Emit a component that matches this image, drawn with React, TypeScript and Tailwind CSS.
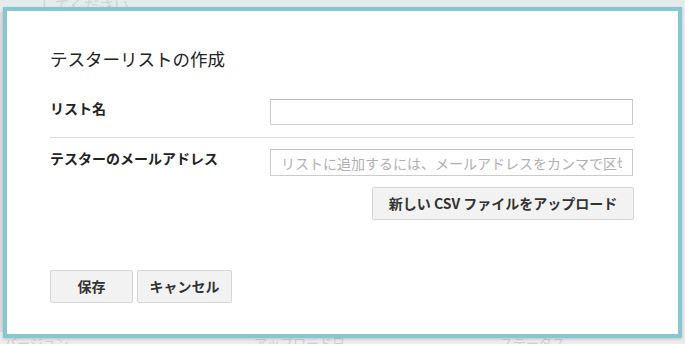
import React from 'react';

const jp = { fontFamily: '"Noto Sans CJK JP", "Noto Sans", sans-serif' };

export default function App() {
  return (
    <div className="relative w-[685px] h-[344px] overflow-hidden bg-[#ececec]" style={jp}>
      {/* page behind the dialog */}
      <div className="absolute inset-x-0 top-0 h-[20px] bg-gradient-to-b from-[#e6eaea] to-[#eceeee]" />
      <div className="absolute left-[40px] top-[-6px] text-[15px] text-[#cfd2d2]">してください</div>
      <div className="absolute left-0 top-[12px] w-[3px] h-[320px] bg-[#dcdcdc]" />
      <div className="absolute left-[4px] top-[333px] text-[13px] text-[#cfcfcf]">バージョン</div>
      <div className="absolute left-[254px] top-[333px] text-[13px] text-[#cfcfcf]">アップロード日</div>
      <div className="absolute left-[500px] top-[333px] text-[13px] text-[#cfcfcf]">ステータス</div>

      {/* dialog */}
      <div className="absolute left-[3px] top-[7px] w-[679px] h-[331px] border-4 border-[#86c8d1] bg-white shadow-[0_1px_3px_rgba(0,0,0,0.2)]">
        <div className="flex flex-col pl-[43px] pr-[44px] pt-[36px]">
          <h1 className="text-[17.5px] leading-[24px] text-[#222] font-normal">テスターリストの作成</h1>

          <div className="flex items-start mt-[28px]">
            <label className="w-[220px] shrink-0 text-[14px] leading-[18px] font-bold text-[#222]">リスト名</label>
            <input
              type="text"
              className="w-[363px] h-[26px] border border-[#cccccc] border-t-[#c0c0c0] bg-white px-[10px] text-[14px] outline-none"
            />
          </div>

          <div className="h-px bg-[#dcdcdc] mt-[12px]" />

          <div className="flex items-start mt-[11px]">
            <label className="w-[220px] shrink-0 text-[14px] leading-[18px] font-bold text-[#222]">テスターのメールアドレス</label>
            <input
              type="text"
              placeholder="リストに追加するには、メールアドレスをカンマで区切って入力してください"
              className="w-[363px] h-[27px] border border-[#cccccc] border-t-[#c0c0c0] bg-white px-[10px] text-[14px] outline-none placeholder:text-[#b0b0b0]"
              style={jp}
            />
          </div>

          <div className="flex justify-end mt-[11px]">
            <button
              className="h-[33px] w-[262px] rounded-[2px] border border-[#d6d6d6] bg-[#f2f2f2] text-[14px] font-bold text-[#333]"
              style={jp}
            >
              新しい CSV ファイルをアップロード
            </button>
          </div>

          <div className="flex gap-[4px] mt-[50px]">
            <button
              className="h-[33px] w-[83px] rounded-[2px] border border-[#d6d6d6] bg-[#f2f2f2] text-[14px] font-bold text-[#333]"
              style={jp}
            >
              保存
            </button>
            <button
              className="h-[33px] w-[95px] rounded-[2px] border border-[#d6d6d6] bg-[#f2f2f2] text-[14px] font-bold text-[#333]"
              style={jp}
            >
              キャンセル
            </button>
          </div>
        </div>
      </div>
    </div>
  );
}
